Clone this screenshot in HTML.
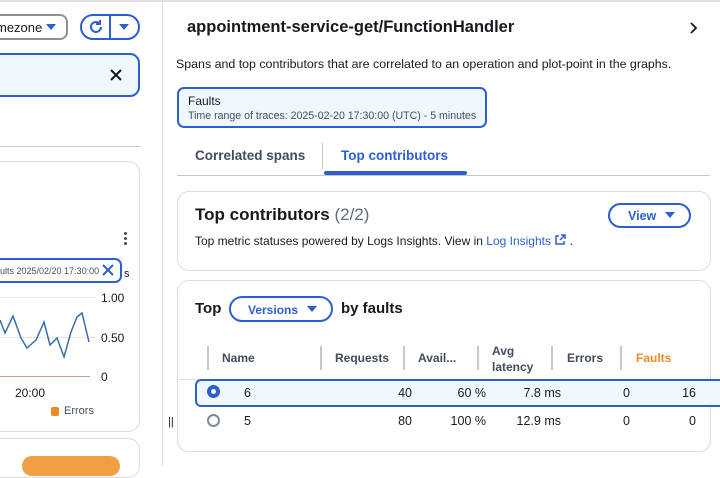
<!DOCTYPE html>
<html><head><style>
*{margin:0;padding:0;box-sizing:border-box}
body{width:720px;height:466px;overflow:hidden;background:#fff;font-family:"Liberation Sans",sans-serif;color:#16191f;position:relative}
.a{position:absolute;white-space:nowrap}
.b{font-weight:bold}
.blue{color:#0972d3}
.tri{position:absolute;width:0;height:0;border-left:5px solid transparent;border-right:5px solid transparent;border-top:6px solid #2d5fd1}
</style></head><body>
<div class="a" style="left:0;top:0;width:720px;height:2px;background:#e0e0e0"></div>
<!-- left panel -->
<div class="a" style="left:-20px;top:14px;width:88px;height:26px;border:2px solid #8d9096;border-radius:8px;font-size:13px;padding:4px 0 0 14px">mezone</div>
<div class="tri" style="left:46px;top:24px"></div>
<div class="a" style="left:80px;top:14px;width:60px;height:26px;border:2px solid #2d5fd1;border-radius:14px"></div>
<div class="a" style="left:109px;top:14px;width:2px;height:26px;background:#2d5fd1"></div>
<svg class="a" style="left:87px;top:18px" width="18" height="18" viewBox="0 0 18 18"><path d="M14 9a5 5 0 1 1-2-4" fill="none" stroke="#2d5fd1" stroke-width="2"/><path d="M13 2v4h-4" fill="none" stroke="#2d5fd1" stroke-width="2"/></svg>
<div class="tri" style="left:119px;top:24px"></div>
<div class="a" style="left:-20px;top:53px;width:160px;height:44px;background:#f0f8ff;border:2px solid #2d5fd1;border-radius:10px"></div>
<svg class="a" style="left:109px;top:68px" width="14" height="14"><path d="M2 2l10 10M12 2L2 12" stroke="#16191f" stroke-width="2"/></svg>
<div class="a" style="left:0;top:146px;width:140px;height:1px;background:#c6c6cd"></div>
<div class="a" style="left:-20px;top:161px;width:160px;height:271px;border:1px solid #dcdcdc;border-radius:12px"></div>
<div class="a" style="left:124px;top:232px;width:3px;height:3px;background:#414d5c;border-radius:50%"></div>
<div class="a" style="left:124px;top:237px;width:3px;height:3px;background:#414d5c;border-radius:50%"></div>
<div class="a" style="left:124px;top:242px;width:3px;height:3px;background:#414d5c;border-radius:50%"></div>
<div class="a" style="left:-20px;top:258px;width:142px;height:25px;border:2px solid #2d5fd1;border-radius:7px;font-size:9px;color:#414d5c;padding:6px 0 0 18px">ults 2025/02/20 17:30:00</div>
<svg class="a" style="left:101px;top:263px" width="14" height="14"><path d="M2 2l10 10M12 2L2 12" stroke="#2d5fd1" stroke-width="2"/></svg>
<div class="a" style="left:124px;top:268px;font-size:11px">s</div>
<div class="a" style="left:0;top:297px;width:95px;height:1px;background:#e5e5e5"></div>
<div class="a" style="left:0;top:337px;width:95px;height:1px;background:#e5e5e5"></div>
<div class="a" style="left:0;top:376px;width:90px;height:1px;background:#c8a58a"></div>
<div class="a" style="left:101px;top:291px;font-size:12px">1.00</div>
<div class="a" style="left:101px;top:331px;font-size:12px">0.50</div>
<div class="a" style="left:101px;top:370px;font-size:12px">0</div>
<svg class="a" style="left:0;top:300px" width="95" height="70"><polyline fill="none" stroke="#3b6ea8" stroke-width="1.5" points="0,20 5,33 13,16 21,38 27,48 36,40 44,22 50,45 57,38 64,57 71,32 77,17 82,13 89,42"/></svg>
<div class="a" style="left:15px;top:386px;font-size:12px">20:00</div>
<div class="a" style="left:51px;top:407px;width:8px;height:9px;background:#ec8a2b;border-radius:2px"></div>
<div class="a" style="left:64px;top:405px;font-size:11px;color:#414d5c">Errors</div>
<div class="a" style="left:-20px;top:438px;width:160px;height:40px;border:1px solid #dcdcdc;border-radius:12px"></div>
<div class="a" style="left:22px;top:456px;width:98px;height:20px;background:#f0a040;border-radius:10px"></div>
<div class="a" style="left:162px;top:0;width:1px;height:466px;background:#dcdcdc"></div>
<div class="a" style="left:168px;top:416px;font-size:11px;color:#16191f">||</div>
<!-- right panel -->
<div class="a b" style="left:187px;top:18px;font-size:16.5px">appointment-service-get/FunctionHandler</div>
<svg class="a" style="left:688px;top:21px" width="12" height="14"><path d="M3 2l5 5-5 5" fill="none" stroke="#16191f" stroke-width="1.8"/></svg>
<div class="a" style="left:176px;top:57px;font-size:12.4px">Spans and top contributors that are correlated to an operation and plot-point in the graphs.</div>
<div class="a" style="left:177px;top:87px;width:310px;height:41px;background:#f0f8ff;border:2px solid #2d5fd1;border-radius:7px"></div>
<div class="a" style="left:188px;top:94px;font-size:12px">Faults</div>
<div class="a" style="left:188px;top:110px;font-size:10.6px;color:#414d5c">Time range of traces: 2025-02-20 17:30:00 (UTC) - 5 minutes</div>
<div class="a b" style="left:195px;top:148px;font-size:13.5px;color:#414d5c">Correlated spans</div>
<div class="a" style="left:322px;top:143px;width:1px;height:26px;background:#c6c6cd"></div>
<div class="a b" style="left:341px;top:148px;font-size:13.5px;color:#2d5fd1">Top contributors</div>
<div class="a" style="left:177px;top:175px;width:533px;height:1px;background:#c6c6cd"></div>
<div class="a" style="left:324px;top:171px;width:143px;height:4px;background:#2d5fd1;border-radius:2px"></div>
<div class="a" style="left:177px;top:191px;width:534px;height:80px;border:1px solid #dcdcdc;border-radius:12px"></div>
<div class="a" style="left:195px;top:205px;font-size:17px"><b>Top contributors</b> <span style="color:#5f6b7a">(2/2)</span></div>
<div class="a b" style="left:608px;top:203px;width:83px;height:25px;border:2px solid #2d5fd1;border-radius:13px;color:#2d5fd1;font-size:12.5px;padding:4px 0 0 18px">View</div>
<div class="tri" style="left:665px;top:212px"></div>
<div class="a" style="left:195px;top:234px;font-size:12px">Top metric statuses powered by Logs Insights. View in <span style="color:#2d5fd1">Log Insights</span> <svg width="12" height="12" style="vertical-align:-1px"><path d="M5 2H2v8h8V7M7 1h4v4M11 1L6 6" fill="none" stroke="#2d5fd1" stroke-width="1.5"/></svg> .</div>
<div class="a" style="left:177px;top:280px;width:534px;height:172px;border:1px solid #dcdcdc;border-radius:12px"></div>
<div class="a b" style="left:195px;top:300px;font-size:15px">Top</div>
<div class="a b" style="left:229px;top:296px;width:104px;height:26px;border:2px solid #2d5fd1;border-radius:13px;color:#2d5fd1;font-size:12px;padding:5px 0 0 17px">Versions</div>
<div class="tri" style="left:307px;top:306px"></div>
<div class="a b" style="left:341px;top:300px;font-size:15px">by faults</div>
<div class="a" style="left:207px;top:346px;width:2px;height:24px;background:#c6c6cd"></div>
<div class="a" style="left:320px;top:346px;width:2px;height:24px;background:#c6c6cd"></div>
<div class="a" style="left:403px;top:346px;width:2px;height:24px;background:#c6c6cd"></div>
<div class="a" style="left:477px;top:346px;width:2px;height:24px;background:#c6c6cd"></div>
<div class="a" style="left:551px;top:346px;width:2px;height:24px;background:#c6c6cd"></div>
<div class="a" style="left:620px;top:346px;width:2px;height:24px;background:#c6c6cd"></div>
<div class="a b" style="left:222px;top:351px;font-size:12px;color:#414d5c">Name</div>
<div class="a b" style="left:335px;top:351px;font-size:12px;color:#414d5c">Requests</div>
<div class="a b" style="left:418px;top:351px;font-size:12px;color:#414d5c">Avail...</div>
<div class="a b" style="left:492px;top:343px;font-size:12px;line-height:16px;color:#414d5c">Avg<br>latency</div>
<div class="a b" style="left:567px;top:351px;font-size:12px;color:#414d5c">Errors</div>
<div class="a b" style="left:636px;top:351px;font-size:12px;color:#ec8a2b">Faults</div>
<div class="a" style="left:177px;top:379px;width:533px;height:1px;background:#e0e0e0"></div>
<div class="a" style="left:195px;top:379px;width:530px;height:28px;background:#f0f8ff;border:2px solid #2d5fd1;border-radius:6px"></div>
<div class="a" style="left:207px;top:385px;width:13px;height:13px;border-radius:50%;border:4px solid #2d5fd1;background:#fff"></div>
<div class="a" style="left:207px;top:414px;width:13px;height:13px;border-radius:50%;border:2px solid #7d8998;background:#fff"></div>
<div class="a" style="left:244px;top:386px;font-size:12.5px">6</div>
<div class="a" style="left:244px;top:414px;font-size:12.5px">5</div>
<div class="a" style="left:380px;top:386px;width:32px;text-align:right;font-size:12.5px">40</div>
<div class="a" style="left:380px;top:414px;width:32px;text-align:right;font-size:12.5px">80</div>
<div class="a" style="left:430px;top:386px;width:56px;text-align:right;font-size:12.5px">60 %</div>
<div class="a" style="left:430px;top:414px;width:56px;text-align:right;font-size:12.5px">100 %</div>
<div class="a" style="left:500px;top:386px;width:61px;text-align:right;font-size:12.5px">7.8 ms</div>
<div class="a" style="left:500px;top:414px;width:61px;text-align:right;font-size:12.5px">12.9 ms</div>
<div class="a" style="left:600px;top:386px;width:30px;text-align:right;font-size:12.5px">0</div>
<div class="a" style="left:600px;top:414px;width:30px;text-align:right;font-size:12.5px">0</div>
<div class="a" style="left:666px;top:386px;width:30px;text-align:right;font-size:12.5px">16</div>
<div class="a" style="left:666px;top:414px;width:30px;text-align:right;font-size:12.5px">0</div>
</body></html>
